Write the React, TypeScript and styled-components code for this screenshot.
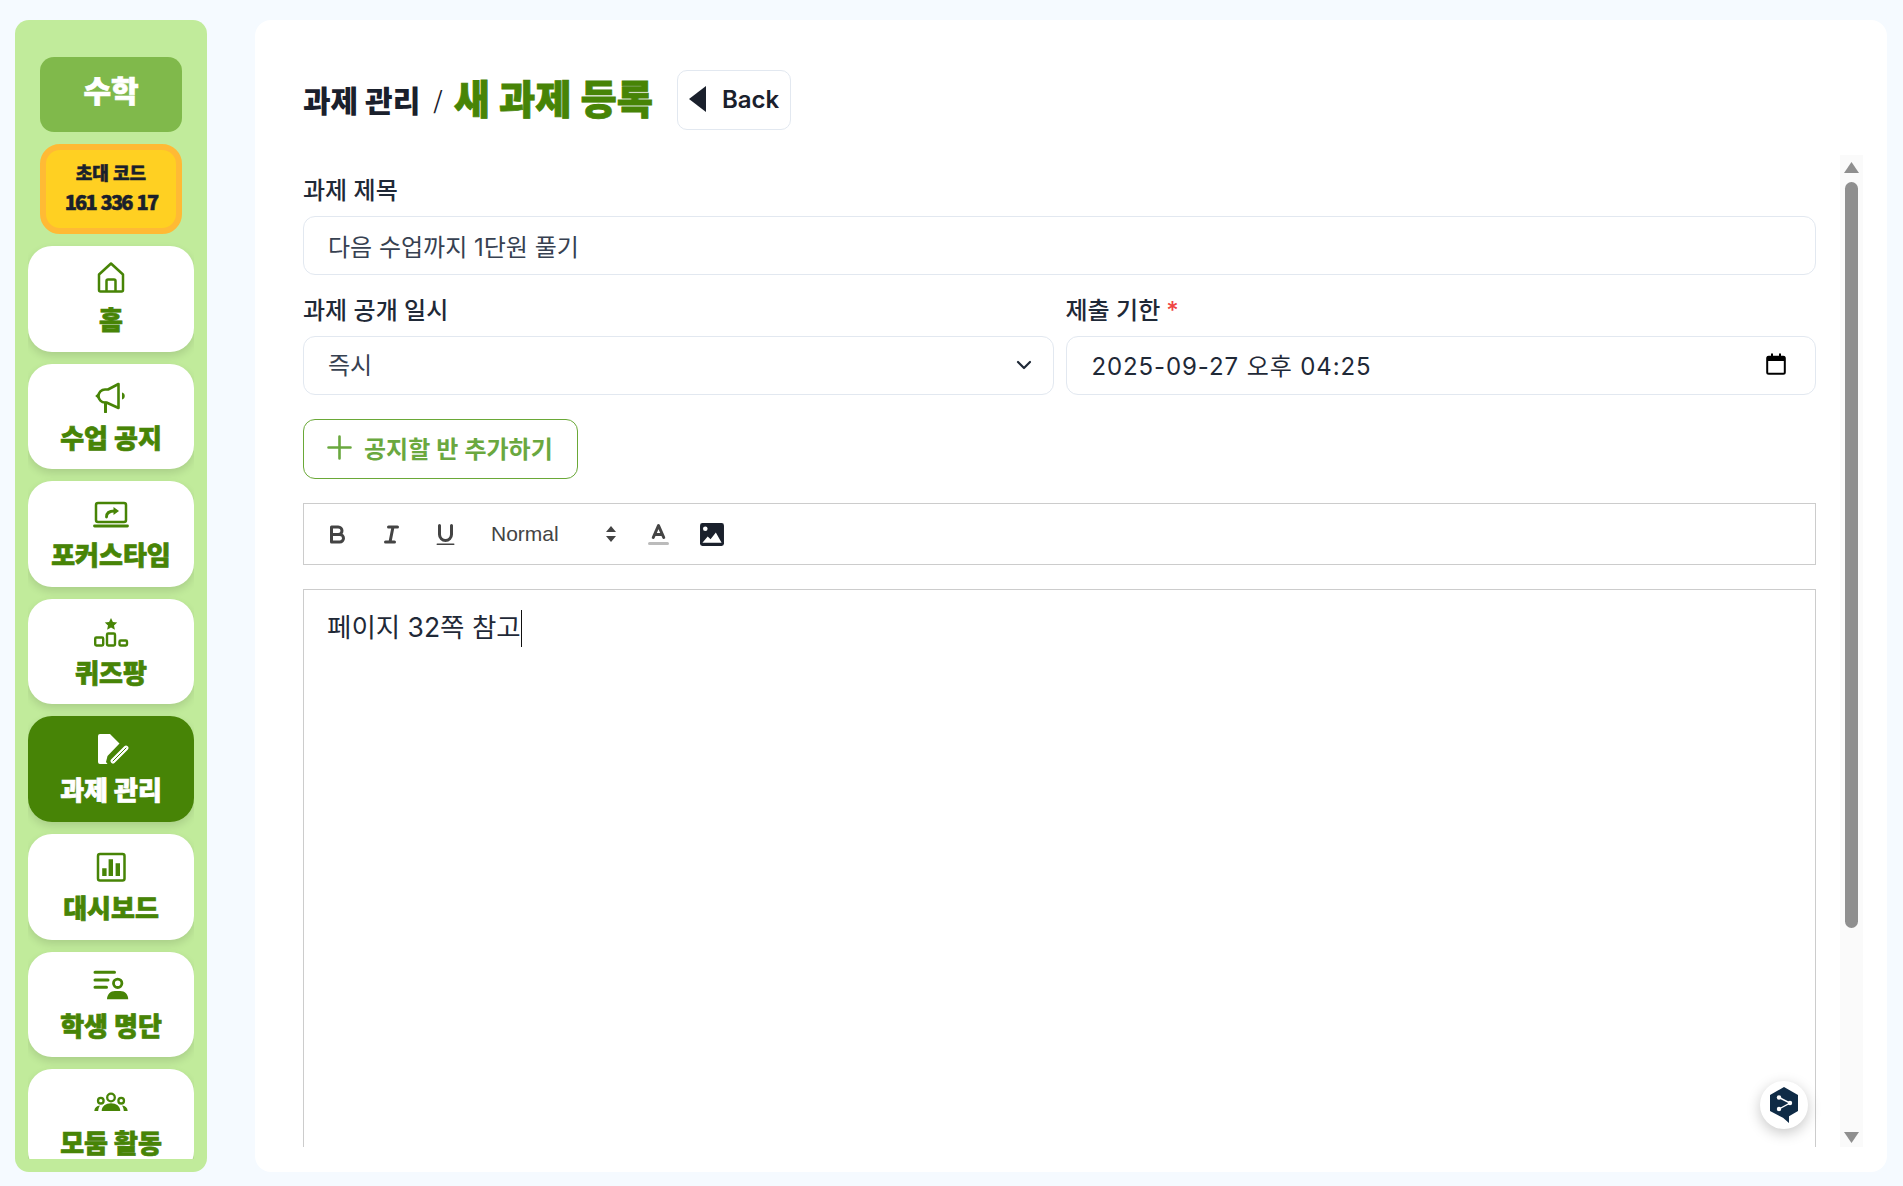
import React from 'react';
import styled, { createGlobalStyle } from 'styled-components';

const GREEN = '#478406';
const KR = '"Noto Sans CJK KR", sans-serif';
const UI = 'Inter, "Noto Sans CJK KR", sans-serif';

const GlobalStyle = createGlobalStyle`
  html, body {
    margin: 0;
    height: 100%;
    background: #f5faff;
    overflow: hidden;
  }
  * { box-sizing: border-box; }
`;

const Page = styled.div`
  display: flex;
  gap: 48px;
  height: 1186px;
  padding: 20px 16px 14px 15px;
  font-family: ${UI};
`;

const Sidebar = styled.aside`
  flex: 0 0 192px;
  padding: 37px 13px 13px;
  background: #c1eb9b;
  border-radius: 14px;
  display: flex;
`;

const SideScroll = styled.div`
  flex: 1;
  overflow: hidden;
  display: flex;
  flex-direction: column;
  gap: 12px;
`;

const Logo = styled.div`
  flex: none;
  height: 75px;
  margin: 0 12px;
  padding-bottom: 11px;
  background: #80b94b;
  border-radius: 14px;
  display: flex;
  align-items: center;
  justify-content: center;
  color: #fff;
  font: 900 30px ${KR};
  -webkit-text-stroke: 0.7px #fff;
`;

const Invite = styled.div`
  flex: none;
  height: 90px;
  margin: 0 12px;
  padding-bottom: 5px;
  background: #ffd022;
  border: 6px solid #ffba35;
  border-radius: 20px;
  display: flex;
  flex-direction: column;
  align-items: center;
  justify-content: center;
  color: #1a202c;
  font-family: ${KR};
  font-weight: 900;
  -webkit-text-stroke: 0.5px #1a202c;
`;

const InviteTitle = styled.div`
  font-size: 18px;
  line-height: 30px;
`;

const InviteCode = styled.div`
  font-size: 20px;
  line-height: 30px;
  letter-spacing: -1.8px;
  word-spacing: 2px;
`;

const NavItem = styled.div<{ $active?: boolean }>`
  flex: none;
  height: 105.6px;
  padding-top: 13px;
  border-radius: 24px;
  background: ${(p) => (p.$active ? GREEN : '#fff')};
  color: ${(p) => (p.$active ? '#fff' : GREEN)};
  box-shadow: 0 4px 8px rgba(0, 0, 0, 0.12);
  display: flex;
  flex-direction: column;
  align-items: center;
`;

const NavIcon = styled.svg`
  width: 36px;
  height: 36px;
  flex: none;
`;

const NavLabel = styled.div`
  margin-top: 6px;
  font: 900 26px/36px ${KR};
  -webkit-text-stroke: 0.7px currentColor;
  white-space: nowrap;
`;

const Panel = styled.main`
  position: relative;
  flex: 1;
  min-width: 0;
  background: #fff;
  border-radius: 16px;
  padding: 50px 24px 25px 48px;
  display: flex;
  flex-direction: column;
`;

const Header = styled.header`
  flex: none;
  height: 60px;
  display: flex;
  align-items: center;
  color: #1a202c;
`;

const Crumb = styled.span`
  margin-top: -3px;
  font: 800 30px/40px ${KR};
`;

const Slash = styled.span`
  margin: -3px 11px 0 13px;
  font: 400 24px/40px ${KR};
`;

const CrumbCurrent = styled.span`
  margin-top: -7px;
  color: ${GREEN};
  font: 900 39.4px/44px ${KR};
  -webkit-text-stroke: 0.8px ${GREEN};
`;

const BackButton = styled.div`
  margin-left: 24px;
  width: 114px;
  height: 60px;
  padding: 0 0 2px 11px;
  border: 1px solid #e2e8f0;
  border-radius: 10px;
  display: flex;
  align-items: center;
  gap: 16px;
  font-size: 24px;
  font-weight: 600;
`;

const Body = styled.div`
  flex: 1;
  min-height: 0;
  margin-top: 25px;
  display: flex;
`;

const FormScroll = styled.div`
  flex: 1;
  min-width: 0;
  overflow: hidden;
  padding: 22px 24px 0 0;
`;

const ScrollTrack = styled.div`
  flex: 0 0 23px;
  background: #fafafa;
  display: flex;
  flex-direction: column;
  align-items: center;
  padding: 7px 0 4px;
`;

const ScrollThumb = styled.div`
  width: 13px;
  height: 746px;
  margin-top: 9px;
  border-radius: 7px;
  background: #8f8f8f;
`;

const ScrollFill = styled.div`
  flex: 1;
`;

const Arrow = styled.svg`
  display: block;
  flex: none;
  width: 15px;
  height: 11px;
  fill: #8f8f8f;
`;

const Label = styled.label`
  display: block;
  height: 39px;
  padding-top: 1px;
  color: #1f2937;
  font-size: 24px;
  font-weight: 500;
  line-height: 26px;
`;

const Required = styled.span`
  margin-left: 6px;
  color: #ef4444;
`;

const Field = styled.div<{ $lift?: number; $right?: number }>`
  height: 59px;
  padding: 0 ${(p) => p.$right ?? 24}px ${(p) => p.$lift ?? 0}px 24px;
  border: 1px solid #e2e8f0;
  border-radius: 12px;
  display: flex;
  align-items: center;
  justify-content: space-between;
  color: #374151;
  font-size: 24px;
`;

const Chevron = styled.svg`
  margin-top: 3px;
`;

const DateValue = styled.span`
  margin-left: 1px;
  color: #1f2937;
  letter-spacing: 0.9px;
`;

const Row = styled.div`
  margin-top: 22px;
  display: grid;
  grid-template-columns: 1fr 1fr;
  gap: 12px;
`;

const AddButton = styled.div`
  width: 275px;
  height: 60px;
  margin-top: 24px;
  padding: 0 0 4px 23px;
  border: 1px solid #6aa837;
  border-radius: 12px;
  display: flex;
  align-items: center;
  gap: 12px;
  color: #6aa83f;
  font-size: 24px;
  font-weight: 600;
`;

const Toolbar = styled.div`
  height: 62px;
  margin-top: 24px;
  padding-left: 6px;
  border: 1px solid #ccc;
  display: flex;
  align-items: center;
`;

const ToolButton = styled.div`
  width: 54px;
  height: 36px;
  display: flex;
  align-items: center;
  justify-content: center;
`;

const ToolIcon = styled.svg`
  width: 27px;
  height: 27px;
  fill: none;
  stroke: #444;
  stroke-width: 2;
  stroke-linecap: round;
  stroke-linejoin: round;
`;

const Picker = styled.div`
  width: 159px;
  height: 36px;
  padding: 0 14px 0 19px;
  display: flex;
  align-items: center;
  justify-content: space-between;
  color: #444;
  font: 400 21px "Liberation Sans", sans-serif;
`;

const Editor = styled.div`
  height: 800px;
  margin-top: 24px;
  padding: 17px 23px;
  border: 1px solid #ccc;
  color: #1f2937;
  font-size: 26.5px;
  line-height: 40px;
`;

const Caret = styled.span`
  display: inline-block;
  width: 1px;
  height: 37px;
  vertical-align: -10px;
  background: #111;
`;

const Widget = styled.div`
  position: absolute;
  right: 79px;
  bottom: 43px;
  width: 48px;
  height: 48px;
  border-radius: 50%;
  background: #fff;
  box-shadow: 0 4px 14px rgba(0, 0, 0, 0.22);
  display: flex;
  align-items: center;
  justify-content: center;
`;

const icons: Record<string, React.ReactNode> = {
  home: (
    <g fill="none" stroke="currentColor" strokeWidth="2.5" strokeLinejoin="round">
      <path d="M6 15.5 18 4.5l12 11V31a1.5 1.5 0 0 1-1.5 1.5h-21A1.5 1.5 0 0 1 6 31Z" />
      <path d="M13.5 32.5V22a1.5 1.5 0 0 1 1.5-1.5h6a1.5 1.5 0 0 1 1.5 1.5v10.5" />
    </g>
  ),
  notice: (
    <g transform="translate(0 2)">
      <path
        d="M25.5 5 15 10.5h-3a6.5 6.5 0 0 0 0 13h1.5l12 5.5Z"
        fill="none"
        stroke="currentColor"
        strokeWidth="2.6"
        strokeLinejoin="round"
      />
      <path d="M12.5 24v9" stroke="currentColor" strokeWidth="3" strokeLinecap="round" />
      <path d="M29 13.5a3.6 3.6 0 0 1 0 7ZM5 14.5 2.2 17 5 19.5Z" fill="currentColor" />
    </g>
  ),
  focus: (
    <g transform="translate(0 1)">
      <rect x="3" y="8" width="30" height="19" rx="2" fill="none" stroke="currentColor" strokeWidth="2.5" />
      <path d="M1.5 31h33" stroke="currentColor" strokeWidth="2.8" strokeLinecap="round" />
      <path d="M13.5 22c0-4 3-6 8-6" fill="none" stroke="currentColor" strokeWidth="2.8" strokeLinecap="round" />
      <path d="m20.5 12 5.5 4-5.5 4Z" fill="currentColor" />
    </g>
  ),
  quiz: (
    <g>
      <path d="m18 6 1.9 4 4.3.5-3.2 3 .9 4.3-3.9-2.2-3.9 2.2.9-4.3-3.2-3 4.3-.5Z" fill="currentColor" />
      <g fill="none" stroke="currentColor" strokeWidth="2.4">
        <rect x="2.2" y="25.5" width="8" height="8" rx="1.2" />
        <rect x="14" y="21.5" width="8" height="12" rx="1.2" />
        <rect x="26.5" y="28.5" width="7.5" height="5" rx="1.2" />
      </g>
    </g>
  ),
  homework: (
    <g>
      <path
        d="M7 5h10l9.5 9.5-12 12.5-1.5 6 1.5 2H7a2 2 0 0 1-2-2V7a2 2 0 0 1 2-2Z"
        fill="currentColor"
      />
      <path d="m20 32 13-13" stroke="currentColor" strokeWidth="4.8" strokeLinecap="round" />
      <path d="m20 32 13-13" stroke={GREEN} strokeWidth="1" strokeLinecap="round" />
    </g>
  ),
  dashboard: (
    <g>
      <rect x="5" y="7" width="26.5" height="26.5" rx="2" fill="none" stroke="currentColor" strokeWidth="2.5" />
      <path d="M9.2 21.3h4.4V29H9.2ZM15.6 12.3H20V29h-4.4ZM22.6 16.3H27V29h-4.4Z" fill="currentColor" />
    </g>
  ),
  students: (
    <g>
      <path d="M2 7.3h19.5M2 15h13M2 22.3h11.5" stroke="currentColor" strokeWidth="3" strokeLinecap="round" />
      <circle cx="24.7" cy="18.3" r="4.2" fill="none" stroke="currentColor" strokeWidth="2.8" />
      <path d="M14 34.3c0-5 3.5-8.3 8-8.3h5.2c4.6 0 8 3.3 8 8.3Z" fill="currentColor" />
    </g>
  ),
  group: (
    <g>
      <g fill="none" stroke="currentColor" strokeWidth="2.3">
        <circle cx="18" cy="15.5" r="3.8" />
        <circle cx="7.8" cy="18.7" r="2.8" />
        <circle cx="28.2" cy="18.7" r="2.8" />
      </g>
      <path
        d="M8.7 29c0-5 4.2-7.8 9.3-7.8s9.3 2.8 9.3 7.8ZM1.3 29c.2-3 2.2-5 5.7-5.4-1 1.6-1.7 3.3-1.8 5.4ZM34.7 29c-.2-3-2.2-5-5.7-5.4 1 1.6 1.7 3.3 1.8 5.4Z"
        fill="currentColor"
      />
    </g>
  ),
};

const navItems = [
  { id: 'home', label: '홈' },
  { id: 'notice', label: '수업 공지' },
  { id: 'focus', label: '포커스타임' },
  { id: 'quiz', label: '퀴즈팡' },
  { id: 'homework', label: '과제 관리', active: true },
  { id: 'dashboard', label: '대시보드' },
  { id: 'students', label: '학생 명단' },
  { id: 'group', label: '모둠 활동' },
];

export default function App() {
  return (
    <Page>
      <GlobalStyle />
      <Sidebar>
        <SideScroll>
          <Logo>수학</Logo>
          <Invite>
            <InviteTitle>초대 코드</InviteTitle>
            <InviteCode>161 336 17</InviteCode>
          </Invite>
          {navItems.map((item) => (
            <NavItem key={item.id} $active={item.active}>
              <NavIcon viewBox="0 0 36 36">{icons[item.id]}</NavIcon>
              <NavLabel>{item.label}</NavLabel>
            </NavItem>
          ))}
        </SideScroll>
      </Sidebar>

      <Panel>
        <Header>
          <Crumb>과제 관리</Crumb>
          <Slash>/</Slash>
          <CrumbCurrent>새 과제 등록</CrumbCurrent>
          <BackButton>
            <svg width="17" height="26" viewBox="0 0 17 26">
              <path d="M17 0v26L0 13Z" fill="#1a202c" />
            </svg>
            Back
          </BackButton>
        </Header>

        <Body>
          <FormScroll>
            <Label>과제 제목</Label>
            <Field>다음 수업까지 1단원 풀기</Field>
            <Row>
              <div>
                <Label>과제 공개 일시</Label>
                <Field $lift={5} $right={21}>
                  즉시
                  <Chevron width="16" height="10" viewBox="0 0 16 10">
                    <path d="m2 2 6 6 6-6" fill="none" stroke="#1f2937" strokeWidth="2.2" strokeLinecap="round" strokeLinejoin="round" />
                  </Chevron>
                </Field>
              </div>
              <div>
                <Label>
                  제출 기한<Required>*</Required>
                </Label>
                <Field $lift={3} $right={29}>
                  <DateValue>2025-09-27 오후 04:25</DateValue>
                  <svg width="20" height="22" viewBox="0 0 20 22">
                    <path d="M1 3.5h18V8H1ZM5 .5h2v4H5ZM13 .5h2v4h-2Z" fill="#000" />
                    <rect x="1.2" y="3.7" width="17.6" height="17" rx="1.5" fill="none" stroke="#000" strokeWidth="2" />
                  </svg>
                </Field>
              </div>
            </Row>
            <AddButton>
              <svg width="25" height="25" viewBox="0 0 25 25">
                <path d="M12.5 1.5v22M1.5 12.5h22" stroke="#6aa83f" strokeWidth="2.6" strokeLinecap="round" />
              </svg>
              공지할 반 추가하기
            </AddButton>
            <Toolbar>
              <ToolButton>
                <ToolIcon viewBox="0 0 18 18">
                  <path d="M5 4h4.5A2.5 2.5 0 0 1 12 6.5 2.5 2.5 0 0 1 9.5 9H5ZM5 9h5.5a2.5 2.5 0 0 1 2.5 2.5 2.5 2.5 0 0 1-2.5 2.5H5Z" />
                </ToolIcon>
              </ToolButton>
              <ToolButton>
                <ToolIcon viewBox="0 0 18 18">
                  <path d="M7 4h6M5 14h6M8 14l2-10" />
                </ToolIcon>
              </ToolButton>
              <ToolButton>
                <ToolIcon viewBox="0 0 18 18">
                  <path d="M5 3v6a4 4 0 0 0 4 4 4 4 0 0 0 4-4V3" />
                  <rect x="3" y="15" width="12" height="1" rx=".5" fill="#444" stroke="none" />
                </ToolIcon>
              </ToolButton>
              <Picker>
                Normal
                <svg width="12" height="16" viewBox="0 0 12 16">
                  <path d="M6 0l5 6H1ZM6 16l5-6H1Z" fill="#444" />
                </svg>
              </Picker>
              <ToolButton>
                <ToolIcon viewBox="0 0 18 18">
                  <path d="M3 15h12" stroke="#bbb" />
                  <path d="M5.5 11 9 3l3.5 8M11.63 9H6.38" />
                </ToolIcon>
              </ToolButton>
              <ToolButton>
                <svg width="24" height="23" viewBox="0 0 25 24">
                  <rect width="25" height="24" rx="2.5" fill="#1a202c" />
                  <circle cx="5.5" cy="6" r="2.4" fill="#fff" />
                  <path d="M2.5 20.5 8 14l3 3 5.5-7 6 10.5Z" fill="#fff" />
                </svg>
              </ToolButton>
            </Toolbar>
            <Editor>
              페이지 32쪽 참고
              <Caret />
            </Editor>
          </FormScroll>
          <ScrollTrack>
            <Arrow viewBox="0 0 15 11">
              <path d="M7.5 0 15 11H0Z" />
            </Arrow>
            <ScrollThumb />
            <ScrollFill />
            <Arrow viewBox="0 0 15 11">
              <path d="M7.5 11 15 0H0Z" />
            </Arrow>
          </ScrollTrack>
        </Body>

        <Widget>
          <svg width="30" height="37" viewBox="0 0 30 37">
            <path d="M15 0 29 8v16l-9 5.2V36l-6-5.2L1 24V8Z" fill="#0f2b46" />
            <path d="M10 10.5 21 16 10 22" fill="none" stroke="#fff" strokeWidth="1.4" />
            <circle cx="10" cy="10.5" r="2.2" fill="#fff" />
            <circle cx="21" cy="16" r="2.2" fill="#fff" />
            <circle cx="10" cy="22" r="2.2" fill="#fff" />
          </svg>
        </Widget>
      </Panel>
    </Page>
  );
}
